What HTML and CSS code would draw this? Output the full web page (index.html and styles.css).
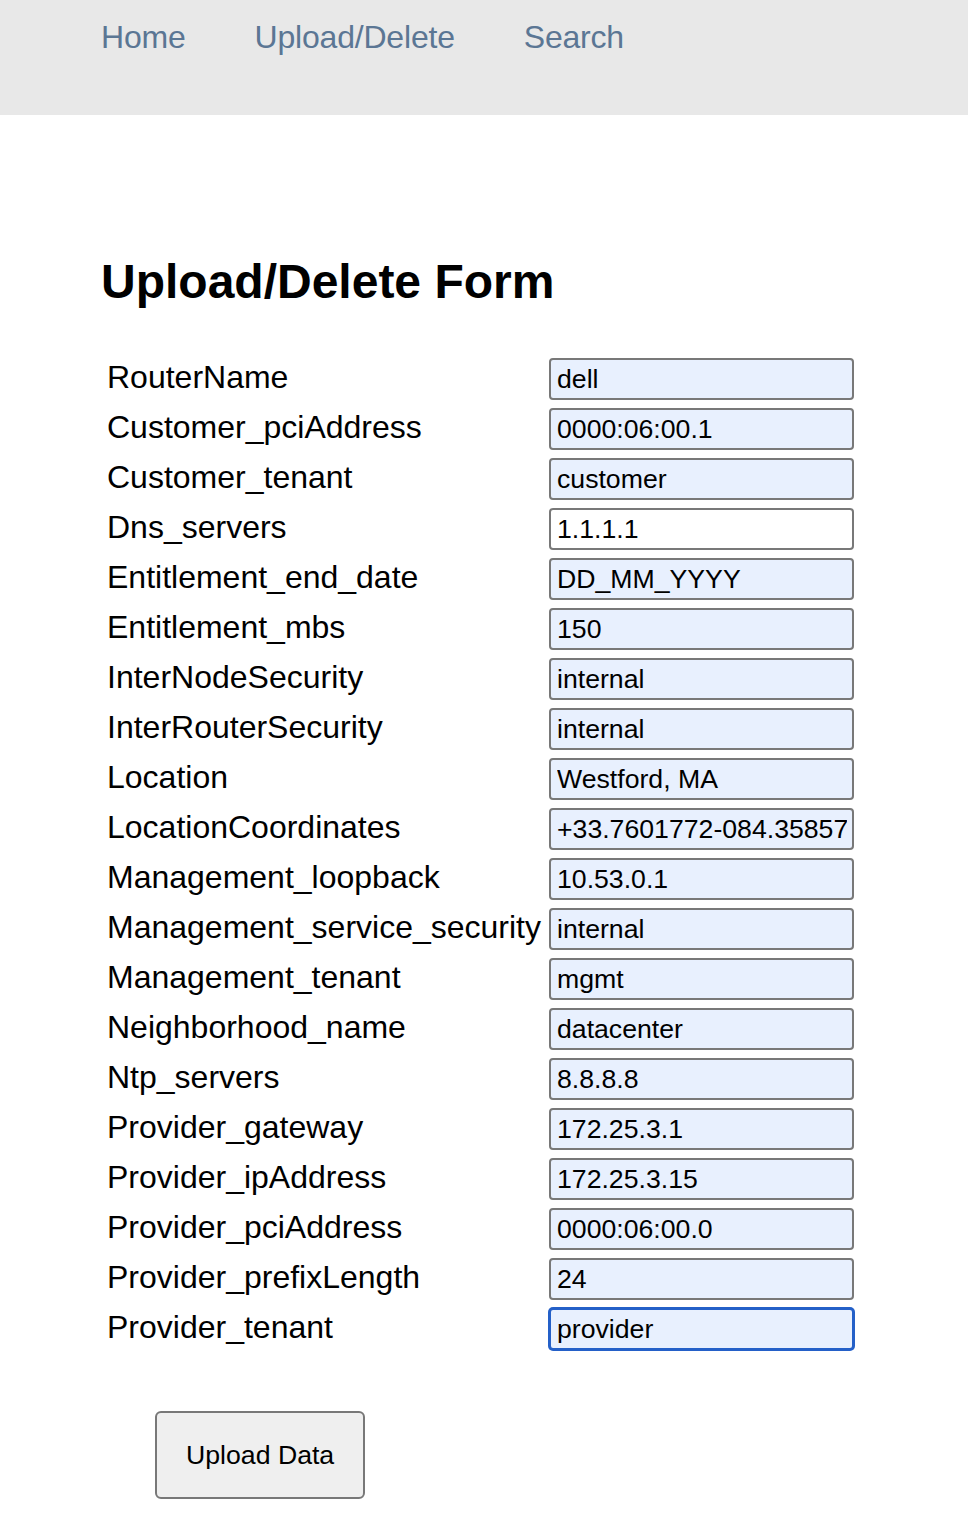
FILE: index.html
```html
<!DOCTYPE html>
<html lang="en">
<head>
<meta charset="utf-8">
<title>Upload/Delete Form</title>
<link rel="stylesheet" href="styles.css">
</head>
<body>
<nav class="topnav">
  <a class="navlink" href="#">Home</a>
  <a class="navlink" href="#">Upload/Delete</a>
  <a class="navlink" href="#">Search</a>
</nav>
<main class="content">
  <h2 class="title">Upload/Delete Form</h2>
  <form class="form">
    <div class="grid">
      <label class="lbl">RouterName</label><input class="field auto" value="dell">
      <label class="lbl">Customer_pciAddress</label><input class="field auto" value="0000:06:00.1">
      <label class="lbl">Customer_tenant</label><input class="field auto" value="customer">
      <label class="lbl">Dns_servers</label><input class="field" value="1.1.1.1">
      <label class="lbl">Entitlement_end_date</label><input class="field auto" value="DD_MM_YYYY">
      <label class="lbl">Entitlement_mbs</label><input class="field auto" value="150">
      <label class="lbl">InterNodeSecurity</label><input class="field auto" value="internal">
      <label class="lbl">InterRouterSecurity</label><input class="field auto" value="internal">
      <label class="lbl">Location</label><input class="field auto" value="Westford, MA">
      <label class="lbl">LocationCoordinates</label><input class="field auto" value="+33.7601772-084.35857">
      <label class="lbl">Management_loopback</label><input class="field auto" value="10.53.0.1">
      <label class="lbl">Management_service_security</label><input class="field auto" value="internal">
      <label class="lbl">Management_tenant</label><input class="field auto" value="mgmt">
      <label class="lbl">Neighborhood_name</label><input class="field auto" value="datacenter">
      <label class="lbl">Ntp_servers</label><input class="field auto" value="8.8.8.8">
      <label class="lbl">Provider_gateway</label><input class="field auto" value="172.25.3.1">
      <label class="lbl">Provider_ipAddress</label><input class="field auto" value="172.25.3.15">
      <label class="lbl">Provider_pciAddress</label><input class="field auto" value="0000:06:00.0">
      <label class="lbl">Provider_prefixLength</label><input class="field auto" value="24">
      <label class="lbl">Provider_tenant</label><input class="field auto focused" value="provider">
    </div>
    <button class="btn" type="button">Upload Data</button>
  </form>
</main>
</body>
</html>
```
FILE: styles.css
```css
html, body {
  margin: 0;
  padding: 0;
  background: #ffffff;
}
body {
  font-family: "Liberation Sans", Arial, Helvetica, sans-serif;
  color: #000000;
}
.topnav {
  box-sizing: border-box;
  height: 115px;
  background: #e8e8e8;
  display: flex;
  align-items: flex-start;
  gap: 69px;
  padding: 19px 0 0 101px;
}
.navlink {
  font-size: 32px;
  line-height: normal;
  color: #5b7694;
  text-decoration: none;
  letter-spacing: -0.2px;
}
.content {
  padding: 0 0 0 101px;
}
.title {
  margin: 139px 0 0 0;
  font-size: 48px;
  font-weight: bold;
  line-height: normal;
}
.form {
  margin: 45px 0 0 0;
}
.grid {
  display: grid;
  grid-template-columns: max-content 305px;
  grid-auto-rows: 50px;
  align-items: center;
}
.lbl {
  font-size: 32px;
  line-height: normal;
  padding: 0 8px 4px 6px;
}
.field {
  box-sizing: border-box;
  width: 305px;
  height: 42px;
  margin: 0;
  padding: 2px 5px 2px 6px;
  border: 2px solid #787878;
  border-radius: 4px;
  background: #ffffff;
  font-family: "Liberation Sans", Arial, Helvetica, sans-serif;
  font-size: 26.67px;
  color: #000000;
  outline: none;
}
.field.auto {
  background: #e8f0fe;
}
.field.focused {
  border: 2px solid #2460c8;
  box-shadow: 0 0 0 1px #2460c8;
}
.btn {
  box-sizing: border-box;
  display: block;
  margin: 57px 0 40px 54px;
  height: 88px;
  padding: 0 29px;
  background: #efefef;
  border: 2px solid #787878;
  border-radius: 6px;
  font-family: "Liberation Sans", Arial, Helvetica, sans-serif;
  font-size: 26.67px;
  color: #000000;
}
```
